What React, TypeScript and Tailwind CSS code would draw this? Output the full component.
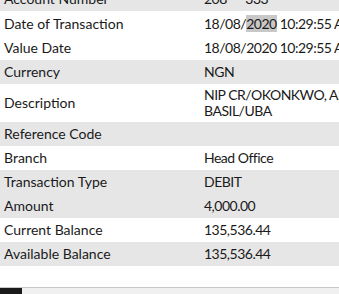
const rows: { label: string; value: React.ReactNode; bg: string; h: string }[] = [
  { label: "Account Number", value: "208      333", bg: "bg-[#e6e6e6]", h: "h-[24px]" },
  {
    label: "Date of Transaction",
    value: (
      <>
        18/08/<span className="bg-[#c8c8c8]">2020</span> 10:29:55 AM
      </>
    ),
    bg: "bg-white",
    h: "h-[25px]",
  },
  { label: "Value Date", value: "18/08/2020 10:29:55 AM", bg: "bg-white", h: "h-[24px]" },
  { label: "Currency", value: "NGN", bg: "bg-[#e6e6e6]", h: "h-[24px]" },
  {
    label: "Description",
    value: (
      <>
        NIP CR/OKONKWO, AMAKA
        <br />
        BASIL/UBA
      </>
    ),
    bg: "bg-white",
    h: "h-[38px]",
  },
  { label: "Reference Code", value: "", bg: "bg-[#e6e6e6]", h: "h-[24px]" },
  { label: "Branch", value: "Head Office", bg: "bg-white", h: "h-[24px]" },
  { label: "Transaction Type", value: "DEBIT", bg: "bg-[#e6e6e6]", h: "h-[24px]" },
  { label: "Amount", value: "4,000.00", bg: "bg-[#e6e6e6]", h: "h-[24px]" },
  { label: "Current Balance", value: "135,536.44", bg: "bg-white", h: "h-[24px]" },
  { label: "Available Balance", value: "135,536.44", bg: "bg-[#e6e6e6]", h: "h-[24px]" },
];

export default function App() {
  return (
    <div
      className="w-[339px] h-[294px] overflow-hidden bg-white text-[14px] leading-[16px] text-[#1a1a1a] flex flex-col"
      style={{ fontFamily: "Lato, 'Liberation Sans', sans-serif" }}
    >
      <div className="-mt-[13px] flex flex-col">
        {rows.map((r) => (
          <div key={r.label} className={`flex items-center w-[420px] ${r.bg} ${r.h}`}>
            <div className="w-[200px] pl-[4px] shrink-0 whitespace-nowrap">{r.label}</div>
            <div className="pl-[4px] whitespace-pre tracking-[-0.5px]">{r.value}</div>
          </div>
        ))}
      </div>
      <div className="h-[21px]" />
      <div className="border-t border-[#c8c8c8] bg-[#f0f0f0] flex-1 flex">
        <div className="w-[22px] bg-[#1a1a1a]" />
      </div>
    </div>
  );
}
